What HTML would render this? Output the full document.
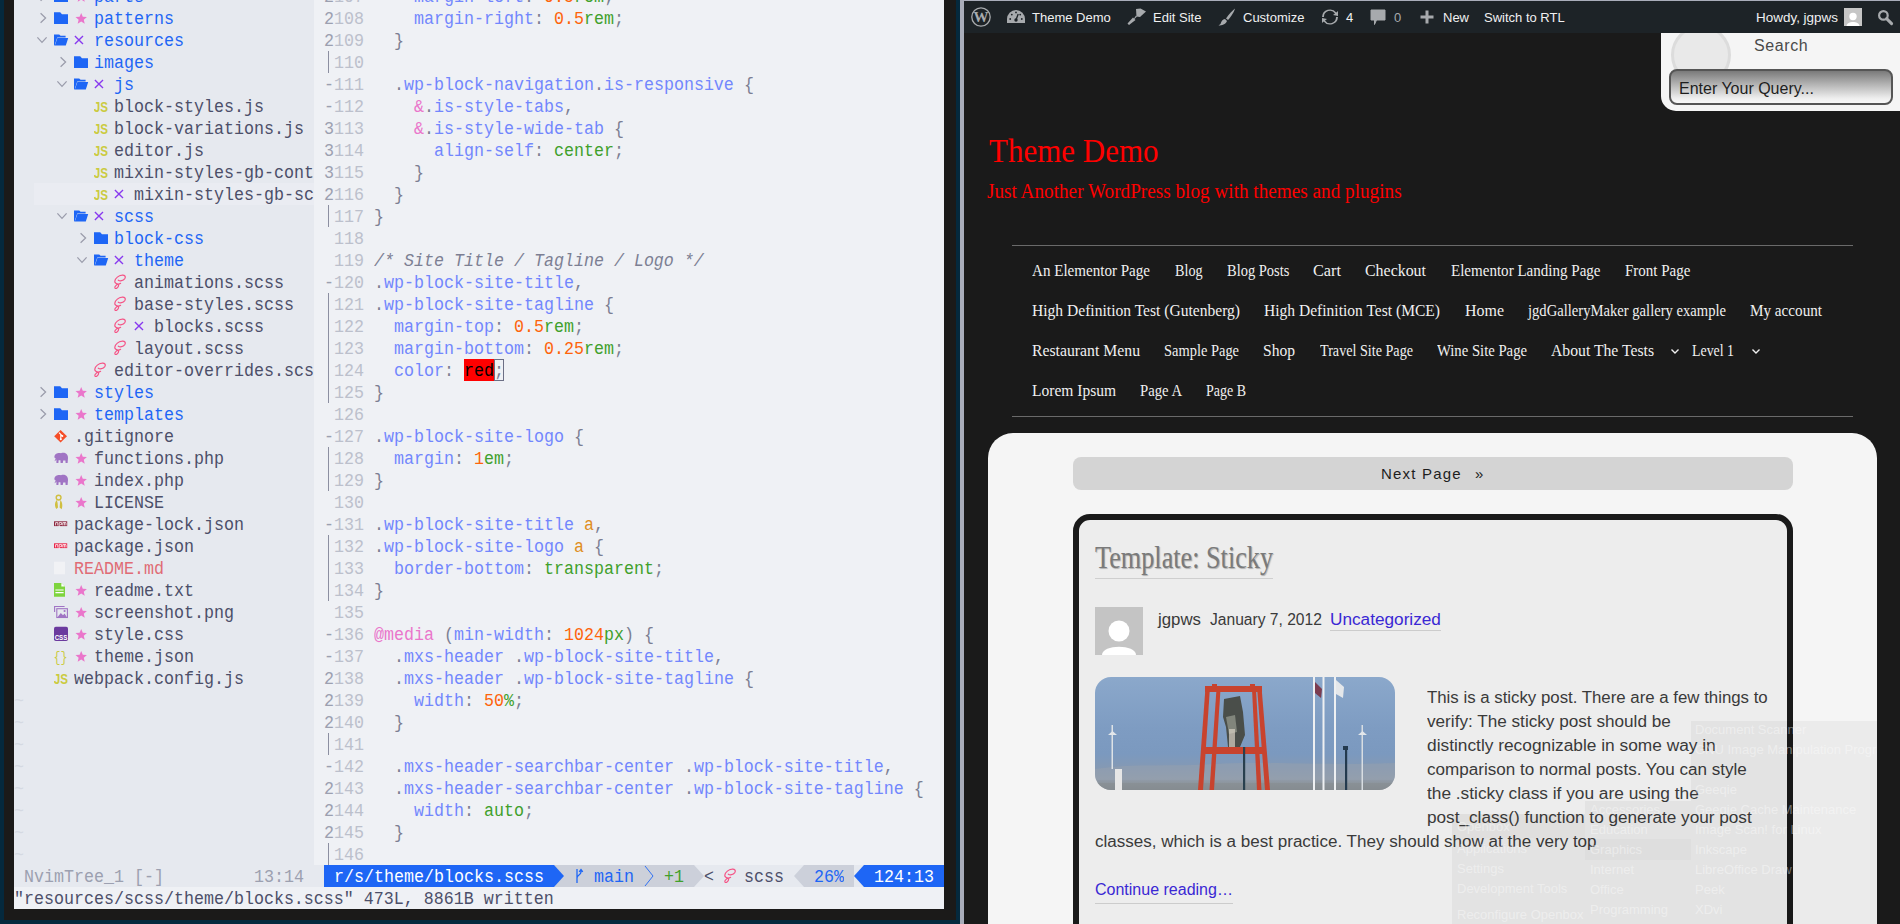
<!DOCTYPE html>
<html><head><meta charset="utf-8"><style>
*{margin:0;padding:0;box-sizing:border-box}
html,body{width:1900px;height:924px;overflow:hidden;background:#1a1a1a}
#term{position:absolute;left:0;top:0;width:960px;height:924px;background:#1b1a19;overflow:hidden}
.t{position:absolute;margin-top:2px;height:22px;line-height:22px;transform-origin:0 15.4px;transform:scaleY(1.08);white-space:pre;font-family:"Liberation Mono",monospace;font-size:16.667px}
.ic{position:absolute}
#web{position:absolute;left:964px;top:0;width:936px;height:924px;background:#1a1a1a;overflow:hidden;font-family:"Liberation Sans",sans-serif}
.w{position:absolute;white-space:nowrap}
</style></head><body>
<div style="position:absolute;left:0;top:0;width:4px;height:924px;background:#05293d"></div>
<div id="term">
<div style="position:absolute;left:0;top:0;width:4px;height:924px;background:#05293d"></div>
<div style="position:absolute;left:0;top:920px;width:960px;height:4px;background:#05293d"></div>
<div style="position:absolute;left:956px;top:0;width:4px;height:924px;background:#05293d"></div>
<div style="position:absolute;left:14px;top:0;width:300px;height:865px;background:#e6e9ef"></div>
<div style="position:absolute;left:314px;top:0;width:630px;height:865px;background:#eff1f5"></div>
<div style="position:absolute;left:34px;top:183px;width:280px;height:22px;background:#eaecf2"></div>
<svg class="ic" style="top:-15px;left:34px" width="20" height="22" viewBox="0 0 20 22"><path d="M6.6 6.2 L11.6 11 L6.6 15.8" fill="none" stroke="#9a9cab" stroke-width="1.25"/></svg>
<svg class="ic" style="top:-15px;left:54px" width="20" height="22" viewBox="0 0 20 22"><path d="M0 5.3 H6.2 L8 7.3 H14 V17 H0 Z" fill="#1e66f5"/></svg>
<svg class="ic" style="top:-15px;left:74px" width="20" height="22" viewBox="0 0 20 22"><path d="M7.20 5.90 L8.79 9.72 L12.91 10.05 L9.77 12.73 L10.73 16.75 L7.20 14.60 L3.67 16.75 L4.63 12.73 L1.49 10.05 L5.61 9.72 Z" fill="#ea76cb"/></svg>
<span class="t" style="top:-15px;left:94px;color:#1e66f5;">parts</span>
<svg class="ic" style="top:7px;left:34px" width="20" height="22" viewBox="0 0 20 22"><path d="M6.6 6.2 L11.6 11 L6.6 15.8" fill="none" stroke="#9a9cab" stroke-width="1.25"/></svg>
<svg class="ic" style="top:7px;left:54px" width="20" height="22" viewBox="0 0 20 22"><path d="M0 5.3 H6.2 L8 7.3 H14 V17 H0 Z" fill="#1e66f5"/></svg>
<svg class="ic" style="top:7px;left:74px" width="20" height="22" viewBox="0 0 20 22"><path d="M7.20 5.90 L8.79 9.72 L12.91 10.05 L9.77 12.73 L10.73 16.75 L7.20 14.60 L3.67 16.75 L4.63 12.73 L1.49 10.05 L5.61 9.72 Z" fill="#ea76cb"/></svg>
<span class="t" style="top:7px;left:94px;color:#1e66f5;">patterns</span>
<svg class="ic" style="top:29px;left:34px" width="20" height="22" viewBox="0 0 20 22"><path d="M3.4 8.4 L8 13.4 L12.6 8.4" fill="none" stroke="#9a9cab" stroke-width="1.25"/></svg>
<svg class="ic" style="top:29px;left:54px" width="20" height="22" viewBox="0 0 20 22"><path d="M0 5.4 H5.2 L6.6 6.8 H11.6 V8.6 H3.2 L0.6 16.6 H0 Z" fill="#1e66f5"/><path d="M3.4 8.9 H14.2 L11.8 16.6 H0.8 Z" fill="#1e66f5"/></svg>
<svg class="ic" style="top:29px;left:74px" width="20" height="22" viewBox="0 0 20 22"><path d="M0.9 6.9 L9 15 M9 6.9 L0.9 15" stroke="#8839ef" stroke-width="1.35"/></svg>
<span class="t" style="top:29px;left:94px;color:#1e66f5;">resources</span>
<svg class="ic" style="top:51px;left:54px" width="20" height="22" viewBox="0 0 20 22"><path d="M6.6 6.2 L11.6 11 L6.6 15.8" fill="none" stroke="#9a9cab" stroke-width="1.25"/></svg>
<svg class="ic" style="top:51px;left:74px" width="20" height="22" viewBox="0 0 20 22"><path d="M0 5.3 H6.2 L8 7.3 H14 V17 H0 Z" fill="#1e66f5"/></svg>
<span class="t" style="top:51px;left:94px;color:#1e66f5;">images</span>
<svg class="ic" style="top:73px;left:54px" width="20" height="22" viewBox="0 0 20 22"><path d="M3.4 8.4 L8 13.4 L12.6 8.4" fill="none" stroke="#9a9cab" stroke-width="1.25"/></svg>
<svg class="ic" style="top:73px;left:74px" width="20" height="22" viewBox="0 0 20 22"><path d="M0 5.4 H5.2 L6.6 6.8 H11.6 V8.6 H3.2 L0.6 16.6 H0 Z" fill="#1e66f5"/><path d="M3.4 8.9 H14.2 L11.8 16.6 H0.8 Z" fill="#1e66f5"/></svg>
<svg class="ic" style="top:73px;left:94px" width="20" height="22" viewBox="0 0 20 22"><path d="M0.9 6.9 L9 15 M9 6.9 L0.9 15" stroke="#8839ef" stroke-width="1.35"/></svg>
<span class="t" style="top:73px;left:114px;color:#1e66f5;">js</span>
<svg class="ic" style="top:95px;left:94px" width="20" height="22" viewBox="0 0 20 22"><text x="-0.2" y="16.8" font-family="Liberation Sans" font-weight="bold" font-size="14.6" fill="#cbcb41" textLength="14.2" lengthAdjust="spacingAndGlyphs">JS</text></svg>
<span class="t" style="top:95px;left:114px;color:#4c4f69;">block-styles.js</span>
<svg class="ic" style="top:117px;left:94px" width="20" height="22" viewBox="0 0 20 22"><text x="-0.2" y="16.8" font-family="Liberation Sans" font-weight="bold" font-size="14.6" fill="#cbcb41" textLength="14.2" lengthAdjust="spacingAndGlyphs">JS</text></svg>
<span class="t" style="top:117px;left:114px;color:#4c4f69;">block-variations.js</span>
<svg class="ic" style="top:139px;left:94px" width="20" height="22" viewBox="0 0 20 22"><text x="-0.2" y="16.8" font-family="Liberation Sans" font-weight="bold" font-size="14.6" fill="#cbcb41" textLength="14.2" lengthAdjust="spacingAndGlyphs">JS</text></svg>
<span class="t" style="top:139px;left:114px;color:#4c4f69;">editor.js</span>
<svg class="ic" style="top:161px;left:94px" width="20" height="22" viewBox="0 0 20 22"><text x="-0.2" y="16.8" font-family="Liberation Sans" font-weight="bold" font-size="14.6" fill="#cbcb41" textLength="14.2" lengthAdjust="spacingAndGlyphs">JS</text></svg>
<span class="t" style="top:161px;left:114px;color:#4c4f69;">mixin-styles-gb-cont</span>
<svg class="ic" style="top:183px;left:94px" width="20" height="22" viewBox="0 0 20 22"><text x="-0.2" y="16.8" font-family="Liberation Sans" font-weight="bold" font-size="14.6" fill="#cbcb41" textLength="14.2" lengthAdjust="spacingAndGlyphs">JS</text></svg>
<svg class="ic" style="top:183px;left:114px" width="20" height="22" viewBox="0 0 20 22"><path d="M0.9 6.9 L9 15 M9 6.9 L0.9 15" stroke="#8839ef" stroke-width="1.35"/></svg>
<span class="t" style="top:183px;left:134px;color:#4c4f69;">mixin-styles-gb-sc</span>
<svg class="ic" style="top:205px;left:54px" width="20" height="22" viewBox="0 0 20 22"><path d="M3.4 8.4 L8 13.4 L12.6 8.4" fill="none" stroke="#9a9cab" stroke-width="1.25"/></svg>
<svg class="ic" style="top:205px;left:74px" width="20" height="22" viewBox="0 0 20 22"><path d="M0 5.4 H5.2 L6.6 6.8 H11.6 V8.6 H3.2 L0.6 16.6 H0 Z" fill="#1e66f5"/><path d="M3.4 8.9 H14.2 L11.8 16.6 H0.8 Z" fill="#1e66f5"/></svg>
<svg class="ic" style="top:205px;left:94px" width="20" height="22" viewBox="0 0 20 22"><path d="M0.9 6.9 L9 15 M9 6.9 L0.9 15" stroke="#8839ef" stroke-width="1.35"/></svg>
<span class="t" style="top:205px;left:114px;color:#1e66f5;">scss</span>
<svg class="ic" style="top:227px;left:74px" width="20" height="22" viewBox="0 0 20 22"><path d="M6.6 6.2 L11.6 11 L6.6 15.8" fill="none" stroke="#9a9cab" stroke-width="1.25"/></svg>
<svg class="ic" style="top:227px;left:94px" width="20" height="22" viewBox="0 0 20 22"><path d="M0 5.3 H6.2 L8 7.3 H14 V17 H0 Z" fill="#1e66f5"/></svg>
<span class="t" style="top:227px;left:114px;color:#1e66f5;">block-css</span>
<svg class="ic" style="top:249px;left:74px" width="20" height="22" viewBox="0 0 20 22"><path d="M3.4 8.4 L8 13.4 L12.6 8.4" fill="none" stroke="#9a9cab" stroke-width="1.25"/></svg>
<svg class="ic" style="top:249px;left:94px" width="20" height="22" viewBox="0 0 20 22"><path d="M0 5.4 H5.2 L6.6 6.8 H11.6 V8.6 H3.2 L0.6 16.6 H0 Z" fill="#1e66f5"/><path d="M3.4 8.9 H14.2 L11.8 16.6 H0.8 Z" fill="#1e66f5"/></svg>
<svg class="ic" style="top:249px;left:114px" width="20" height="22" viewBox="0 0 20 22"><path d="M0.9 6.9 L9 15 M9 6.9 L0.9 15" stroke="#8839ef" stroke-width="1.35"/></svg>
<span class="t" style="top:249px;left:134px;color:#1e66f5;">theme</span>
<svg class="ic" style="top:271px;left:114px" width="20" height="22" viewBox="0 0 20 22"><path d="M4.3 9.2 C6 10.3 9 10 10.8 7.6 C12.2 5.6 10.6 3.8 8 4.2 C4.8 4.6 1.2 7 0.8 10.2 C0.6 12 2.6 13 4.4 13.2 C5.4 13.2 6.2 12.6 6.6 12.3 M4.4 13.2 C5 14.4 4.2 16.6 2.4 17.4 C0.6 18 0.4 16.2 1.6 14.8 C2.4 13.8 3.6 13.4 4.4 13.2" fill="none" stroke="#f55385" stroke-width="1.2" stroke-linecap="round"/></svg>
<span class="t" style="top:271px;left:134px;color:#4c4f69;">animations.scss</span>
<svg class="ic" style="top:293px;left:114px" width="20" height="22" viewBox="0 0 20 22"><path d="M4.3 9.2 C6 10.3 9 10 10.8 7.6 C12.2 5.6 10.6 3.8 8 4.2 C4.8 4.6 1.2 7 0.8 10.2 C0.6 12 2.6 13 4.4 13.2 C5.4 13.2 6.2 12.6 6.6 12.3 M4.4 13.2 C5 14.4 4.2 16.6 2.4 17.4 C0.6 18 0.4 16.2 1.6 14.8 C2.4 13.8 3.6 13.4 4.4 13.2" fill="none" stroke="#f55385" stroke-width="1.2" stroke-linecap="round"/></svg>
<span class="t" style="top:293px;left:134px;color:#4c4f69;">base-styles.scss</span>
<svg class="ic" style="top:315px;left:114px" width="20" height="22" viewBox="0 0 20 22"><path d="M4.3 9.2 C6 10.3 9 10 10.8 7.6 C12.2 5.6 10.6 3.8 8 4.2 C4.8 4.6 1.2 7 0.8 10.2 C0.6 12 2.6 13 4.4 13.2 C5.4 13.2 6.2 12.6 6.6 12.3 M4.4 13.2 C5 14.4 4.2 16.6 2.4 17.4 C0.6 18 0.4 16.2 1.6 14.8 C2.4 13.8 3.6 13.4 4.4 13.2" fill="none" stroke="#f55385" stroke-width="1.2" stroke-linecap="round"/></svg>
<svg class="ic" style="top:315px;left:134px" width="20" height="22" viewBox="0 0 20 22"><path d="M0.9 6.9 L9 15 M9 6.9 L0.9 15" stroke="#8839ef" stroke-width="1.35"/></svg>
<span class="t" style="top:315px;left:154px;color:#4c4f69;">blocks.scss</span>
<svg class="ic" style="top:337px;left:114px" width="20" height="22" viewBox="0 0 20 22"><path d="M4.3 9.2 C6 10.3 9 10 10.8 7.6 C12.2 5.6 10.6 3.8 8 4.2 C4.8 4.6 1.2 7 0.8 10.2 C0.6 12 2.6 13 4.4 13.2 C5.4 13.2 6.2 12.6 6.6 12.3 M4.4 13.2 C5 14.4 4.2 16.6 2.4 17.4 C0.6 18 0.4 16.2 1.6 14.8 C2.4 13.8 3.6 13.4 4.4 13.2" fill="none" stroke="#f55385" stroke-width="1.2" stroke-linecap="round"/></svg>
<span class="t" style="top:337px;left:134px;color:#4c4f69;">layout.scss</span>
<svg class="ic" style="top:359px;left:94px" width="20" height="22" viewBox="0 0 20 22"><path d="M4.3 9.2 C6 10.3 9 10 10.8 7.6 C12.2 5.6 10.6 3.8 8 4.2 C4.8 4.6 1.2 7 0.8 10.2 C0.6 12 2.6 13 4.4 13.2 C5.4 13.2 6.2 12.6 6.6 12.3 M4.4 13.2 C5 14.4 4.2 16.6 2.4 17.4 C0.6 18 0.4 16.2 1.6 14.8 C2.4 13.8 3.6 13.4 4.4 13.2" fill="none" stroke="#f55385" stroke-width="1.2" stroke-linecap="round"/></svg>
<span class="t" style="top:359px;left:114px;color:#4c4f69;">editor-overrides.scs</span>
<svg class="ic" style="top:381px;left:34px" width="20" height="22" viewBox="0 0 20 22"><path d="M6.6 6.2 L11.6 11 L6.6 15.8" fill="none" stroke="#9a9cab" stroke-width="1.25"/></svg>
<svg class="ic" style="top:381px;left:54px" width="20" height="22" viewBox="0 0 20 22"><path d="M0 5.3 H6.2 L8 7.3 H14 V17 H0 Z" fill="#1e66f5"/></svg>
<svg class="ic" style="top:381px;left:74px" width="20" height="22" viewBox="0 0 20 22"><path d="M7.20 5.90 L8.79 9.72 L12.91 10.05 L9.77 12.73 L10.73 16.75 L7.20 14.60 L3.67 16.75 L4.63 12.73 L1.49 10.05 L5.61 9.72 Z" fill="#ea76cb"/></svg>
<span class="t" style="top:381px;left:94px;color:#1e66f5;">styles</span>
<svg class="ic" style="top:403px;left:34px" width="20" height="22" viewBox="0 0 20 22"><path d="M6.6 6.2 L11.6 11 L6.6 15.8" fill="none" stroke="#9a9cab" stroke-width="1.25"/></svg>
<svg class="ic" style="top:403px;left:54px" width="20" height="22" viewBox="0 0 20 22"><path d="M0 5.3 H6.2 L8 7.3 H14 V17 H0 Z" fill="#1e66f5"/></svg>
<svg class="ic" style="top:403px;left:74px" width="20" height="22" viewBox="0 0 20 22"><path d="M7.20 5.90 L8.79 9.72 L12.91 10.05 L9.77 12.73 L10.73 16.75 L7.20 14.60 L3.67 16.75 L4.63 12.73 L1.49 10.05 L5.61 9.72 Z" fill="#ea76cb"/></svg>
<span class="t" style="top:403px;left:94px;color:#1e66f5;">templates</span>
<svg class="ic" style="top:425px;left:54px" width="20" height="22" viewBox="0 0 20 22"><path d="M6.6 4.9 L13 11.2 L6.6 17.5 L0.2 11.2 Z" fill="#f54d27"/><path d="M5 7.6 L8.2 10.8 M6.8 9.4 V14.2" stroke="#fff" stroke-width="1.1"/><circle cx="6.8" cy="14.2" r="1" fill="#fff"/><circle cx="8.3" cy="10.9" r="1" fill="#fff"/></svg>
<span class="t" style="top:425px;left:74px;color:#4c4f69;">.gitignore</span>
<svg class="ic" style="top:447px;left:54px" width="20" height="22" viewBox="0 0 20 22"><path d="M0.4 10 C0.4 6.6 4 5.6 7 6.2 C8.6 5.4 11.2 5.6 12.6 7 C13.8 8.2 14 9.6 14 11 L13.6 16 H11.6 L11.4 13.4 H9.2 L8.8 16 H6.6 L6.4 13.2 H4.6 L4.4 16 H2.4 L2.4 12.6 C1.6 13.6 1 14 0.6 14.4 C0.8 13 1.6 12.2 2 11.6 C1 11.4 0.4 10.8 0.4 10 Z" fill="#a074c4"/></svg>
<svg class="ic" style="top:447px;left:74px" width="20" height="22" viewBox="0 0 20 22"><path d="M7.20 5.90 L8.79 9.72 L12.91 10.05 L9.77 12.73 L10.73 16.75 L7.20 14.60 L3.67 16.75 L4.63 12.73 L1.49 10.05 L5.61 9.72 Z" fill="#ea76cb"/></svg>
<span class="t" style="top:447px;left:94px;color:#4c4f69;">functions.php</span>
<svg class="ic" style="top:469px;left:54px" width="20" height="22" viewBox="0 0 20 22"><path d="M0.4 10 C0.4 6.6 4 5.6 7 6.2 C8.6 5.4 11.2 5.6 12.6 7 C13.8 8.2 14 9.6 14 11 L13.6 16 H11.6 L11.4 13.4 H9.2 L8.8 16 H6.6 L6.4 13.2 H4.6 L4.4 16 H2.4 L2.4 12.6 C1.6 13.6 1 14 0.6 14.4 C0.8 13 1.6 12.2 2 11.6 C1 11.4 0.4 10.8 0.4 10 Z" fill="#a074c4"/></svg>
<svg class="ic" style="top:469px;left:74px" width="20" height="22" viewBox="0 0 20 22"><path d="M7.20 5.90 L8.79 9.72 L12.91 10.05 L9.77 12.73 L10.73 16.75 L7.20 14.60 L3.67 16.75 L4.63 12.73 L1.49 10.05 L5.61 9.72 Z" fill="#ea76cb"/></svg>
<span class="t" style="top:469px;left:94px;color:#4c4f69;">index.php</span>
<svg class="ic" style="top:491px;left:54px" width="20" height="22" viewBox="0 0 20 22"><circle cx="4.6" cy="6.6" r="2.4" fill="none" stroke="#d0bf41" stroke-width="1.4"/><path d="M2.8 9 C0.4 11 0.6 16 2.4 18 L4 16.4 L3.6 12 Z M6.4 9 C8.6 11 8.8 16 7.6 18.2 L5.6 16.6 L6 12 Z" fill="#d0bf41"/></svg>
<svg class="ic" style="top:491px;left:74px" width="20" height="22" viewBox="0 0 20 22"><path d="M7.20 5.90 L8.79 9.72 L12.91 10.05 L9.77 12.73 L10.73 16.75 L7.20 14.60 L3.67 16.75 L4.63 12.73 L1.49 10.05 L5.61 9.72 Z" fill="#ea76cb"/></svg>
<span class="t" style="top:491px;left:94px;color:#4c4f69;">LICENSE</span>
<svg class="ic" style="top:513px;left:54px" width="20" height="22" viewBox="0 0 20 22"><rect x="0" y="8.3" width="13.2" height="4.8" fill="#8e2840"/><path d="M1.6 12.4 V9.6 H3.8 V12.4 M5.2 13.8 V9.6 H7.6 V11.6 H6.2 M8.8 12.4 V9.6 H12 V12.4 M10.4 9.6 V12.4" stroke="#fff" stroke-width="0.8" fill="none"/></svg>
<span class="t" style="top:513px;left:74px;color:#4c4f69;">package-lock.json</span>
<svg class="ic" style="top:535px;left:54px" width="20" height="22" viewBox="0 0 20 22"><rect x="0" y="8.3" width="13.2" height="4.8" fill="#e8274b"/><path d="M1.6 12.4 V9.6 H3.8 V12.4 M5.2 13.8 V9.6 H7.6 V11.6 H6.2 M8.8 12.4 V9.6 H12 V12.4 M10.4 9.6 V12.4" stroke="#fff" stroke-width="0.8" fill="none"/></svg>
<span class="t" style="top:535px;left:74px;color:#4c4f69;">package.json</span>
<svg class="ic" style="top:557px;left:54px" width="20" height="22" viewBox="0 0 20 22"><path d="M0 4.7 H11 V17.3 H0 Z" fill="#f1f2f5"/></svg>
<span class="t" style="top:557px;left:74px;color:#e06c75;">README.md</span>
<svg class="ic" style="top:579px;left:54px" width="20" height="22" viewBox="0 0 20 22"><path d="M0 4 H7.4 L11 7.6 V17.7 H0 Z" fill="#7ed43e"/><path d="M7.4 4 V7.6 H11 Z" fill="#fff"/><path d="M1.4 11 H9.6 M1.4 13.6 H9.6" stroke="#fff" stroke-width="1.2"/></svg>
<svg class="ic" style="top:579px;left:74px" width="20" height="22" viewBox="0 0 20 22"><path d="M7.20 5.90 L8.79 9.72 L12.91 10.05 L9.77 12.73 L10.73 16.75 L7.20 14.60 L3.67 16.75 L4.63 12.73 L1.49 10.05 L5.61 9.72 Z" fill="#ea76cb"/></svg>
<span class="t" style="top:579px;left:94px;color:#4c4f69;">readme.txt</span>
<svg class="ic" style="top:601px;left:54px" width="20" height="22" viewBox="0 0 20 22"><path d="M0.6 11 V5.5 H10.6" fill="none" stroke="#a074c4" stroke-width="1.1"/><rect x="2.8" y="7.7" width="10.6" height="8.8" fill="none" stroke="#a074c4" stroke-width="1.1"/><path d="M3.3 16.4 L6.8 12 L9 14.2 L10.6 12.6 L13 16.4 Z" fill="#a074c4"/><circle cx="10.6" cy="10" r="1.1" fill="#a074c4"/></svg>
<svg class="ic" style="top:601px;left:74px" width="20" height="22" viewBox="0 0 20 22"><path d="M7.20 5.90 L8.79 9.72 L12.91 10.05 L9.77 12.73 L10.73 16.75 L7.20 14.60 L3.67 16.75 L4.63 12.73 L1.49 10.05 L5.61 9.72 Z" fill="#ea76cb"/></svg>
<span class="t" style="top:601px;left:94px;color:#4c4f69;">screenshot.png</span>
<svg class="ic" style="top:623px;left:54px" width="20" height="22" viewBox="0 0 20 22"><rect x="0" y="3.8" width="14" height="14.2" rx="1.8" fill="#6b3a9e"/><text x="7" y="16.6" text-anchor="middle" font-family="Liberation Sans" font-weight="bold" font-size="8" fill="#fff" textLength="12.6" lengthAdjust="spacingAndGlyphs">CSS</text></svg>
<svg class="ic" style="top:623px;left:74px" width="20" height="22" viewBox="0 0 20 22"><path d="M7.20 5.90 L8.79 9.72 L12.91 10.05 L9.77 12.73 L10.73 16.75 L7.20 14.60 L3.67 16.75 L4.63 12.73 L1.49 10.05 L5.61 9.72 Z" fill="#ea76cb"/></svg>
<span class="t" style="top:623px;left:94px;color:#4c4f69;">style.css</span>
<svg class="ic" style="top:645px;left:54px" width="20" height="22" viewBox="0 0 20 22"><text x="-0.5" y="16.6" font-family="Liberation Mono" font-size="15" fill="#cbcb41" textLength="14" lengthAdjust="spacingAndGlyphs">{}</text></svg>
<svg class="ic" style="top:645px;left:74px" width="20" height="22" viewBox="0 0 20 22"><path d="M7.20 5.90 L8.79 9.72 L12.91 10.05 L9.77 12.73 L10.73 16.75 L7.20 14.60 L3.67 16.75 L4.63 12.73 L1.49 10.05 L5.61 9.72 Z" fill="#ea76cb"/></svg>
<span class="t" style="top:645px;left:94px;color:#4c4f69;">theme.json</span>
<svg class="ic" style="top:667px;left:54px" width="20" height="22" viewBox="0 0 20 22"><text x="-0.2" y="16.8" font-family="Liberation Sans" font-weight="bold" font-size="14.6" fill="#cbcb41" textLength="14.2" lengthAdjust="spacingAndGlyphs">JS</text></svg>
<span class="t" style="top:667px;left:74px;color:#4c4f69;">webpack.config.js</span>
<span class="t" style="top:689px;left:14px;color:#d5d9e2;">~</span>
<span class="t" style="top:711px;left:14px;color:#d5d9e2;">~</span>
<span class="t" style="top:733px;left:14px;color:#d5d9e2;">~</span>
<span class="t" style="top:755px;left:14px;color:#d5d9e2;">~</span>
<span class="t" style="top:777px;left:14px;color:#d5d9e2;">~</span>
<span class="t" style="top:799px;left:14px;color:#d5d9e2;">~</span>
<span class="t" style="top:821px;left:14px;color:#d5d9e2;">~</span>
<span class="t" style="top:843px;left:14px;color:#d5d9e2;">~</span>
<div style="position:absolute;left:464px;top:359px;width:30px;height:22px;background:#ff0000"></div>
<span class="t" style="top:-15px;left:324px;color:#9ca0b0;">2</span>
<span class="t" style="top:-15px;left:334px;color:#bcc0cc;">107</span>
<span class="t" style="top:-15px;left:374px"><span style="color:#7c7f93">    </span><span style="color:#7287fd">margin-left</span><span style="color:#7c7f93">: </span><span style="color:#fe640b">0.5</span><span style="color:#40a02b">rem</span><span style="color:#7c7f93">;</span></span>
<span class="t" style="top:7px;left:324px;color:#9ca0b0;">2</span>
<span class="t" style="top:7px;left:334px;color:#bcc0cc;">108</span>
<span class="t" style="top:7px;left:374px"><span style="color:#7c7f93">    </span><span style="color:#7287fd">margin-right</span><span style="color:#7c7f93">: </span><span style="color:#fe640b">0.5</span><span style="color:#40a02b">rem</span><span style="color:#7c7f93">;</span></span>
<span class="t" style="top:29px;left:324px;color:#9ca0b0;">2</span>
<span class="t" style="top:29px;left:334px;color:#bcc0cc;">109</span>
<span class="t" style="top:29px;left:374px"><span style="color:#7c7f93">  }</span></span>
<span class="t" style="top:51px;left:334px;color:#bcc0cc;">110</span>
<span class="t" style="top:73px;left:324px;color:#9ca0b0;">-</span>
<span class="t" style="top:73px;left:334px;color:#bcc0cc;">111</span>
<span class="t" style="top:73px;left:374px"><span style="color:#7c7f93">  </span><span style="color:#7c7f93">.</span><span style="color:#7287fd">wp-block-navigation</span><span style="color:#7c7f93">.</span><span style="color:#7287fd">is-responsive</span><span style="color:#7c7f93"> </span><span style="color:#7c7f93">{</span></span>
<span class="t" style="top:95px;left:324px;color:#9ca0b0;">-</span>
<span class="t" style="top:95px;left:334px;color:#bcc0cc;">112</span>
<span class="t" style="top:95px;left:374px"><span style="color:#7c7f93">    </span><span style="color:#ea76cb">&amp;</span><span style="color:#7c7f93">.</span><span style="color:#7287fd">is-style-tabs</span><span style="color:#7c7f93">,</span></span>
<span class="t" style="top:117px;left:324px;color:#9ca0b0;">3</span>
<span class="t" style="top:117px;left:334px;color:#bcc0cc;">113</span>
<span class="t" style="top:117px;left:374px"><span style="color:#7c7f93">    </span><span style="color:#ea76cb">&amp;</span><span style="color:#7c7f93">.</span><span style="color:#7287fd">is-style-wide-tab</span><span style="color:#7c7f93"> </span><span style="color:#7c7f93">{</span></span>
<span class="t" style="top:139px;left:324px;color:#9ca0b0;">3</span>
<span class="t" style="top:139px;left:334px;color:#bcc0cc;">114</span>
<span class="t" style="top:139px;left:374px"><span style="color:#7c7f93">      </span><span style="color:#7287fd">align-self</span><span style="color:#7c7f93">: </span><span style="color:#40a02b">center</span><span style="color:#7c7f93">;</span></span>
<span class="t" style="top:161px;left:324px;color:#9ca0b0;">3</span>
<span class="t" style="top:161px;left:334px;color:#bcc0cc;">115</span>
<span class="t" style="top:161px;left:374px"><span style="color:#7c7f93">    }</span></span>
<span class="t" style="top:183px;left:324px;color:#9ca0b0;">2</span>
<span class="t" style="top:183px;left:334px;color:#bcc0cc;">116</span>
<span class="t" style="top:183px;left:374px"><span style="color:#7c7f93">  }</span></span>
<span class="t" style="top:205px;left:334px;color:#bcc0cc;">117</span>
<span class="t" style="top:205px;left:374px"><span style="color:#7c7f93">}</span></span>
<span class="t" style="top:227px;left:334px;color:#bcc0cc;">118</span>
<span class="t" style="top:249px;left:334px;color:#bcc0cc;">119</span>
<span class="t" style="top:249px;left:374px"><span style="color:#7c7f93;font-style:italic">/* Site Title / Tagline / Logo */</span></span>
<span class="t" style="top:271px;left:324px;color:#9ca0b0;">-</span>
<span class="t" style="top:271px;left:334px;color:#bcc0cc;">120</span>
<span class="t" style="top:271px;left:374px"><span style="color:#7c7f93">.</span><span style="color:#7287fd">wp-block-site-title</span><span style="color:#7c7f93">,</span></span>
<span class="t" style="top:293px;left:334px;color:#bcc0cc;">121</span>
<span class="t" style="top:293px;left:374px"><span style="color:#7c7f93">.</span><span style="color:#7287fd">wp-block-site-tagline</span><span style="color:#7c7f93"> </span><span style="color:#7c7f93">{</span></span>
<span class="t" style="top:315px;left:334px;color:#bcc0cc;">122</span>
<span class="t" style="top:315px;left:374px"><span style="color:#7c7f93">  </span><span style="color:#7287fd">margin-top</span><span style="color:#7c7f93">: </span><span style="color:#fe640b">0.5</span><span style="color:#40a02b">rem</span><span style="color:#7c7f93">;</span></span>
<span class="t" style="top:337px;left:334px;color:#bcc0cc;">123</span>
<span class="t" style="top:337px;left:374px"><span style="color:#7c7f93">  </span><span style="color:#7287fd">margin-bottom</span><span style="color:#7c7f93">: </span><span style="color:#fe640b">0.25</span><span style="color:#40a02b">rem</span><span style="color:#7c7f93">;</span></span>
<span class="t" style="top:359px;left:334px;color:#bcc0cc;">124</span>
<span class="t" style="top:359px;left:374px"><span style="color:#7c7f93">  </span><span style="color:#7287fd">color</span><span style="color:#7c7f93">: </span><span style="color:#000000">red</span><span style="color:#7c7f93">;</span></span>
<span class="t" style="top:381px;left:334px;color:#bcc0cc;">125</span>
<span class="t" style="top:381px;left:374px"><span style="color:#7c7f93">}</span></span>
<span class="t" style="top:403px;left:334px;color:#bcc0cc;">126</span>
<span class="t" style="top:425px;left:324px;color:#9ca0b0;">-</span>
<span class="t" style="top:425px;left:334px;color:#bcc0cc;">127</span>
<span class="t" style="top:425px;left:374px"><span style="color:#7c7f93">.</span><span style="color:#7287fd">wp-block-site-logo</span><span style="color:#7c7f93"> </span><span style="color:#7c7f93">{</span></span>
<span class="t" style="top:447px;left:334px;color:#bcc0cc;">128</span>
<span class="t" style="top:447px;left:374px"><span style="color:#7c7f93">  </span><span style="color:#7287fd">margin</span><span style="color:#7c7f93">: </span><span style="color:#fe640b">1</span><span style="color:#40a02b">em</span><span style="color:#7c7f93">;</span></span>
<span class="t" style="top:469px;left:334px;color:#bcc0cc;">129</span>
<span class="t" style="top:469px;left:374px"><span style="color:#7c7f93">}</span></span>
<span class="t" style="top:491px;left:334px;color:#bcc0cc;">130</span>
<span class="t" style="top:513px;left:324px;color:#9ca0b0;">-</span>
<span class="t" style="top:513px;left:334px;color:#bcc0cc;">131</span>
<span class="t" style="top:513px;left:374px"><span style="color:#7c7f93">.</span><span style="color:#7287fd">wp-block-site-title</span><span style="color:#7c7f93"> </span><span style="color:#df8e1d">a</span><span style="color:#7c7f93">,</span></span>
<span class="t" style="top:535px;left:334px;color:#bcc0cc;">132</span>
<span class="t" style="top:535px;left:374px"><span style="color:#7c7f93">.</span><span style="color:#7287fd">wp-block-site-logo</span><span style="color:#7c7f93"> </span><span style="color:#df8e1d">a</span><span style="color:#7c7f93"> </span><span style="color:#7c7f93">{</span></span>
<span class="t" style="top:557px;left:334px;color:#bcc0cc;">133</span>
<span class="t" style="top:557px;left:374px"><span style="color:#7c7f93">  </span><span style="color:#7287fd">border-bottom</span><span style="color:#7c7f93">: </span><span style="color:#40a02b">transparent</span><span style="color:#7c7f93">;</span></span>
<span class="t" style="top:579px;left:334px;color:#bcc0cc;">134</span>
<span class="t" style="top:579px;left:374px"><span style="color:#7c7f93">}</span></span>
<span class="t" style="top:601px;left:334px;color:#bcc0cc;">135</span>
<span class="t" style="top:623px;left:324px;color:#9ca0b0;">-</span>
<span class="t" style="top:623px;left:334px;color:#bcc0cc;">136</span>
<span class="t" style="top:623px;left:374px"><span style="color:#ea76cb">@media</span><span style="color:#7c7f93"> (</span><span style="color:#7287fd">min-width</span><span style="color:#7c7f93">: </span><span style="color:#fe640b">1024</span><span style="color:#40a02b">px</span><span style="color:#7c7f93">) {</span></span>
<span class="t" style="top:645px;left:324px;color:#9ca0b0;">-</span>
<span class="t" style="top:645px;left:334px;color:#bcc0cc;">137</span>
<span class="t" style="top:645px;left:374px"><span style="color:#7c7f93">  </span><span style="color:#7c7f93">.</span><span style="color:#7287fd">mxs-header</span><span style="color:#7c7f93"> </span><span style="color:#7c7f93">.</span><span style="color:#7287fd">wp-block-site-title</span><span style="color:#7c7f93">,</span></span>
<span class="t" style="top:667px;left:324px;color:#9ca0b0;">2</span>
<span class="t" style="top:667px;left:334px;color:#bcc0cc;">138</span>
<span class="t" style="top:667px;left:374px"><span style="color:#7c7f93">  </span><span style="color:#7c7f93">.</span><span style="color:#7287fd">mxs-header</span><span style="color:#7c7f93"> </span><span style="color:#7c7f93">.</span><span style="color:#7287fd">wp-block-site-tagline</span><span style="color:#7c7f93"> </span><span style="color:#7c7f93">{</span></span>
<span class="t" style="top:689px;left:324px;color:#9ca0b0;">2</span>
<span class="t" style="top:689px;left:334px;color:#bcc0cc;">139</span>
<span class="t" style="top:689px;left:374px"><span style="color:#7c7f93">    </span><span style="color:#7287fd">width</span><span style="color:#7c7f93">: </span><span style="color:#fe640b">50</span><span style="color:#40a02b">%</span><span style="color:#7c7f93">;</span></span>
<span class="t" style="top:711px;left:324px;color:#9ca0b0;">2</span>
<span class="t" style="top:711px;left:334px;color:#bcc0cc;">140</span>
<span class="t" style="top:711px;left:374px"><span style="color:#7c7f93">  }</span></span>
<span class="t" style="top:733px;left:334px;color:#bcc0cc;">141</span>
<span class="t" style="top:755px;left:324px;color:#9ca0b0;">-</span>
<span class="t" style="top:755px;left:334px;color:#bcc0cc;">142</span>
<span class="t" style="top:755px;left:374px"><span style="color:#7c7f93">  </span><span style="color:#7c7f93">.</span><span style="color:#7287fd">mxs-header-searchbar-center</span><span style="color:#7c7f93"> </span><span style="color:#7c7f93">.</span><span style="color:#7287fd">wp-block-site-title</span><span style="color:#7c7f93">,</span></span>
<span class="t" style="top:777px;left:324px;color:#9ca0b0;">2</span>
<span class="t" style="top:777px;left:334px;color:#bcc0cc;">143</span>
<span class="t" style="top:777px;left:374px"><span style="color:#7c7f93">  </span><span style="color:#7c7f93">.</span><span style="color:#7287fd">mxs-header-searchbar-center</span><span style="color:#7c7f93"> </span><span style="color:#7c7f93">.</span><span style="color:#7287fd">wp-block-site-tagline</span><span style="color:#7c7f93"> </span><span style="color:#7c7f93">{</span></span>
<span class="t" style="top:799px;left:324px;color:#9ca0b0;">2</span>
<span class="t" style="top:799px;left:334px;color:#bcc0cc;">144</span>
<span class="t" style="top:799px;left:374px"><span style="color:#7c7f93">    </span><span style="color:#7287fd">width</span><span style="color:#7c7f93">: </span><span style="color:#40a02b">auto</span><span style="color:#7c7f93">;</span></span>
<span class="t" style="top:821px;left:324px;color:#9ca0b0;">2</span>
<span class="t" style="top:821px;left:334px;color:#bcc0cc;">145</span>
<span class="t" style="top:821px;left:374px"><span style="color:#7c7f93">  }</span></span>
<span class="t" style="top:843px;left:334px;color:#bcc0cc;">146</span>
<div style="position:absolute;left:328px;top:51px;width:1px;height:22px;background:#8c8fa1"></div>
<div style="position:absolute;left:328px;top:205px;width:1px;height:22px;background:#8c8fa1"></div>
<div style="position:absolute;left:328px;top:293px;width:1px;height:22px;background:#8c8fa1"></div>
<div style="position:absolute;left:328px;top:315px;width:1px;height:22px;background:#8c8fa1"></div>
<div style="position:absolute;left:328px;top:337px;width:1px;height:22px;background:#8c8fa1"></div>
<div style="position:absolute;left:328px;top:359px;width:1px;height:22px;background:#8c8fa1"></div>
<div style="position:absolute;left:328px;top:381px;width:1px;height:22px;background:#8c8fa1"></div>
<div style="position:absolute;left:328px;top:447px;width:1px;height:22px;background:#8c8fa1"></div>
<div style="position:absolute;left:328px;top:469px;width:1px;height:22px;background:#8c8fa1"></div>
<div style="position:absolute;left:328px;top:535px;width:1px;height:22px;background:#8c8fa1"></div>
<div style="position:absolute;left:328px;top:557px;width:1px;height:22px;background:#8c8fa1"></div>
<div style="position:absolute;left:328px;top:579px;width:1px;height:22px;background:#8c8fa1"></div>
<div style="position:absolute;left:328px;top:733px;width:1px;height:22px;background:#8c8fa1"></div>
<div style="position:absolute;left:328px;top:843px;width:1px;height:22px;background:#8c8fa1"></div>
<div style="position:absolute;left:494px;top:359px;width:10px;height:22px;border:1.5px solid #6c6f85"></div>
<div style="position:absolute;left:14px;top:865px;width:310px;height:22px;background:#e6e9ef"></div>
<span class="t" style="top:865px;left:24px;color:#9ca0b0;">NvimTree_1 [-]</span>
<span class="t" style="top:865px;left:254px;color:#9ca0b0;">13:14</span>
<div style="position:absolute;left:324px;top:865px;width:620px;height:22px;background:#e6e9ef"></div>
<div style="position:absolute;left:324px;top:865px;width:230px;height:22px;background:#1e66f5"></div>
<div style="position:absolute;left:554px;top:865px;width:140px;height:22px;background:#ccd0da"></div>
<svg style="position:absolute;left:554px;top:865px" width="10" height="22"><path d="M0 0 L10 11 L0 22 Z" fill="#1e66f5"/></svg>
<svg style="position:absolute;left:694px;top:865px" width="10" height="22"><path d="M0 0 L10 11 L0 22 Z" fill="#ccd0da"/></svg>
<div style="position:absolute;left:804px;top:865px;width:50px;height:22px;background:#ccd0da"></div>
<svg style="position:absolute;left:794px;top:865px" width="10" height="22"><path d="M10 0 L0 11 L10 22 Z" fill="#ccd0da"/></svg>
<div style="position:absolute;left:864px;top:865px;width:80px;height:22px;background:#1e66f5"></div>
<svg style="position:absolute;left:854px;top:865px" width="10" height="22"><path d="M10 0 L0 11 L10 22 Z" fill="#1e66f5"/></svg>
<span class="t" style="top:865px;left:334px;color:#ffffff;">r/s/theme/blocks.scss</span>
<svg style="position:absolute;left:574px;top:865px" width="10" height="22"><path d="M3 4 V18 M3 13 C3 10 7 10 7 7 V5 M5.2 6.8 L7 4.5 L8.8 6.8" fill="none" stroke="#1e66f5" stroke-width="1.3"/></svg>
<span class="t" style="top:865px;left:594px;color:#1e66f5;">main</span>
<svg style="position:absolute;left:644px;top:865px" width="10" height="22"><path d="M1 1 L9 11 L1 21" fill="none" stroke="#1e66f5" stroke-width="0.9"/></svg>
<span class="t" style="top:865px;left:664px;color:#40a02b;">+1</span>
<span class="t" style="top:865px;left:704px;color:#4c4f69;">&lt;</span>
<svg style="position:absolute;left:724px;top:865px" width="14" height="22"><path d="M4.3 9.2 C6 10.3 9 10 10.8 7.6 C12.2 5.6 10.6 3.8 8 4.2 C4.8 4.6 1.2 7 0.8 10.2 C0.6 12 2.6 13 4.4 13.2 C5.4 13.2 6.2 12.6 6.6 12.3 M4.4 13.2 C5 14.4 4.2 16.6 2.4 17.4 C0.6 18 0.4 16.2 1.6 14.8 C2.4 13.8 3.6 13.4 4.4 13.2" fill="none" stroke="#f55385" stroke-width="1.2" stroke-linecap="round"/></svg>
<span class="t" style="top:865px;left:744px;color:#4c4f69;">scss</span>
<span class="t" style="top:865px;left:814px;color:#1e66f5;">26%</span>
<span class="t" style="top:865px;left:874px;color:#ffffff;">124:13</span>
<div style="position:absolute;left:14px;top:887px;width:930px;height:22px;background:#eff1f5"></div>
<span class="t" style="top:887px;left:14px;color:#4c4f69;">&quot;resources/scss/theme/blocks.scss&quot; 473L, 8861B written</span>
</div>
<div style="position:absolute;left:960px;top:0;width:4px;height:924px;background:#a9adba"></div>
<div id="web">
<div style="position:absolute;left:0px;top:1px;width:936px;height:32px;background:#1d2327"></div>
<svg style="position:absolute;left:7px;top:7px" width="20" height="20" viewBox="0 0 20 20"><circle cx="10" cy="10" r="9.2" fill="none" stroke="#a7aaad" stroke-width="1.3"/><text x="10" y="15.2" text-anchor="middle" font-family="Liberation Serif" font-weight="bold" font-size="15" fill="#a7aaad" textLength="15" lengthAdjust="spacingAndGlyphs">W</text></svg>
<svg style="position:absolute;left:43px;top:8px" width="18" height="16" viewBox="0 0 18 16"><path d="M0 15 V11 A9 9 0 0 1 18 11 V15 Z" fill="#a7aaad"/><circle cx="9" cy="12" r="1.7" fill="#1d2327"/><path d="M9 12 L11.2 6" stroke="#1d2327" stroke-width="1.3"/><circle cx="3.2" cy="11" r="0.9" fill="#1d2327"/><circle cx="4.8" cy="6.6" r="0.9" fill="#1d2327"/><circle cx="9" cy="4.4" r="0.9" fill="#1d2327"/><circle cx="14.8" cy="11" r="0.9" fill="#1d2327"/><circle cx="13.2" cy="6.6" r="0.9" fill="#1d2327"/></svg>
<div class="w" style="left:68px;top:2px;font-size:13px;color:#f0f0f1;line-height:32px;height:32px">Theme Demo</div>
<svg style="position:absolute;left:163px;top:8px" width="20" height="18" viewBox="0 0 20 18"><path d="M9 1 L13.5 0.5 L19 3.5 L13 9 L9.5 8.5 Z" fill="#a7aaad"/><path d="M10 8.5 L7.5 11 L8.5 12 L2 17 L0.5 15.5 L6 9.5 L7 10.5 L9 7.5 Z" fill="#a7aaad"/></svg>
<div class="w" style="left:189px;top:2px;font-size:13px;color:#f0f0f1;line-height:32px;height:32px">Edit Site</div>
<svg style="position:absolute;left:254px;top:8px" width="18" height="18" viewBox="0 0 18 18"><path d="M17 0.5 C15 2 10 7 8 10.5 L10 12 C13 9 16.5 3 17 0.5 Z" fill="#a7aaad"/><path d="M7 11 C4.5 11.5 3.5 13 2.5 16 L0.5 17.5 C4 17.5 7.5 16.5 9 13 Z" fill="#a7aaad"/></svg>
<div class="w" style="left:279px;top:2px;font-size:13px;color:#f0f0f1;line-height:32px;height:32px">Customize</div>
<svg style="position:absolute;left:357px;top:8px" width="18" height="18" viewBox="0 0 18 18"><path d="M3 9 A6 6 0 0 1 14 5.5 L12 7 L17 8 L17 3 L15.3 4.6 A8 8 0 0 0 1 9 Z" fill="#a7aaad"/><path d="M15 9 A6 6 0 0 1 4 12.5 L6 11 L1 10 L1 15 L2.7 13.4 A8 8 0 0 0 17 9 Z" fill="#a7aaad"/></svg>
<div class="w" style="left:382px;top:2px;font-size:13px;color:#f0f0f1;line-height:32px;height:32px">4</div>
<svg style="position:absolute;left:406px;top:9px" width="16" height="18" viewBox="0 0 16 18"><path d="M1 1 H15 V11 H6.5 L4.5 15.5 L4.5 11 H1 Z" fill="#a7aaad" stroke="#a7aaad" stroke-width="1" stroke-linejoin="round"/></svg>
<div class="w" style="left:430px;top:2px;font-size:13px;color:#a7aaad;line-height:32px;height:32px">0</div>
<svg style="position:absolute;left:456px;top:10px" width="14" height="14" viewBox="0 0 14 14"><path d="M7 0.5 V13.5 M0.5 7 H13.5" stroke="#a7aaad" stroke-width="3"/></svg>
<div class="w" style="left:479px;top:2px;font-size:13px;color:#f0f0f1;line-height:32px;height:32px">New</div>
<div class="w" style="left:520px;top:2px;font-size:13px;color:#f0f0f1;line-height:32px;height:32px">Switch to RTL</div>
<div class="w" style="left:792px;top:2px;font-size:13px;color:#f0f0f1;line-height:32px;height:32px;transform-origin:0 0;transform:scaleX(1.035)">Howdy, jgpws</div>
<div style="position:absolute;left:880px;top:8px;width:18px;height:18px;background:#c6c6c6"></div>
<svg style="position:absolute;left:880px;top:8px" width="18" height="18" viewBox="0 0 18 18"><circle cx="9" cy="8.5" r="3.7" fill="#fff"/><path d="M2.5 18 C3 12.8 15 12.8 15.5 18 Z" fill="#fff"/></svg>
<svg style="position:absolute;left:913px;top:9px" width="17" height="17" viewBox="0 0 17 17"><circle cx="6.4" cy="6.4" r="4.3" fill="none" stroke="#a7aaad" stroke-width="2.2"/><path d="M9.6 9.6 L14.6 14.6" stroke="#a7aaad" stroke-width="3" stroke-linecap="round"/></svg>
<div style="position:absolute;left:697px;top:33px;width:239px;height:78px;background:#f5f5f5;border-bottom-left-radius:15px"></div>
<div style="position:absolute;left:707px;top:25px;width:60px;height:60px;border-radius:50%;border:3px solid #dcdcdc;background:#e9e9e9;clip-path:inset(8px -5px -5px -5px)"></div>
<div class="w" style="left:790px;top:34px;font-size:16px;color:#4a4a4a;line-height:24px;letter-spacing:0.6px">Search</div>
<div style="position:absolute;left:705px;top:69px;width:224px;height:36px;border:2px solid #555555;border-radius:8px;background:linear-gradient(#7a7a7a,#b8b8b8 45%,#eeeeee 85%,#f8f8f8)"></div>
<div class="w" style="left:715px;top:78px;font-size:16px;color:#1e1e1e;line-height:22px">Enter Your Query...</div>
<div class="w" style="left:25px;top:131px;font-family:'Liberation Serif',serif;color:#ff0000;transform-origin:0 0;white-space:nowrap;font-size:33.5px;line-height:40px;transform:scaleX(0.925)">Theme Demo</div>
<div class="w" style="left:23px;top:178px;font-family:'Liberation Serif',serif;color:#ff0000;transform-origin:0 0;white-space:nowrap;font-size:20px;line-height:26px;transform:scaleX(0.96)">Just Another WordPress blog with themes and plugins</div>
<div style="position:absolute;left:48px;top:245px;width:841px;height:1px;background:#6a6a6a"></div>
<div style="position:absolute;left:48px;top:416px;width:841px;height:1px;background:#6a6a6a"></div>
<div class="w" style="left:68px;top:260px;font-family:'Liberation Serif',serif;color:#f0f0f0;font-size:17px;line-height:22px;white-space:nowrap;transform-origin: 0 0;transform:scaleX(0.8864)">An Elementor Page</div>
<div class="w" style="left:210.5999999999999px;top:260px;font-family:'Liberation Serif',serif;color:#f0f0f0;font-size:17px;line-height:22px;white-space:nowrap;transform-origin: 0 0;transform:scaleX(0.8348)">Blog</div>
<div class="w" style="left:262.70000000000005px;top:260px;font-family:'Liberation Serif',serif;color:#f0f0f0;font-size:17px;line-height:22px;white-space:nowrap;transform-origin: 0 0;transform:scaleX(0.8511)">Blog Posts</div>
<div class="w" style="left:349px;top:260px;font-family:'Liberation Serif',serif;color:#f0f0f0;font-size:17px;line-height:22px;white-space:nowrap;transform-origin: 0 0;transform:scaleX(0.9568)">Cart</div>
<div class="w" style="left:401px;top:260px;font-family:'Liberation Serif',serif;color:#f0f0f0;font-size:17px;line-height:22px;white-space:nowrap;transform-origin: 0 0;transform:scaleX(0.9362)">Checkout</div>
<div class="w" style="left:486.5px;top:260px;font-family:'Liberation Serif',serif;color:#f0f0f0;font-size:17px;line-height:22px;white-space:nowrap;transform-origin: 0 0;transform:scaleX(0.8846)">Elementor Landing Page</div>
<div class="w" style="left:660.5999999999999px;top:260px;font-family:'Liberation Serif',serif;color:#f0f0f0;font-size:17px;line-height:22px;white-space:nowrap;transform-origin: 0 0;transform:scaleX(0.8823)">Front Page</div>
<div class="w" style="left:68px;top:300px;font-family:'Liberation Serif',serif;color:#f0f0f0;font-size:17px;line-height:22px;white-space:nowrap;transform-origin: 0 0;transform:scaleX(0.9158)">High Definition Test (Gutenberg)</div>
<div class="w" style="left:300px;top:300px;font-family:'Liberation Serif',serif;color:#f0f0f0;font-size:17px;line-height:22px;white-space:nowrap;transform-origin: 0 0;transform:scaleX(0.9141)">High Definition Test (MCE)</div>
<div class="w" style="left:501px;top:300px;font-family:'Liberation Serif',serif;color:#f0f0f0;font-size:17px;line-height:22px;white-space:nowrap;transform-origin: 0 0;transform:scaleX(0.9387)">Home</div>
<div class="w" style="left:564px;top:300px;font-family:'Liberation Serif',serif;color:#f0f0f0;font-size:17px;line-height:22px;white-space:nowrap;transform-origin: 0 0;transform:scaleX(0.8597)">jgdGalleryMaker gallery example</div>
<div class="w" style="left:786px;top:300px;font-family:'Liberation Serif',serif;color:#f0f0f0;font-size:17px;line-height:22px;white-space:nowrap;transform-origin: 0 0;transform:scaleX(0.8920)">My account</div>
<div class="w" style="left:68px;top:340px;font-family:'Liberation Serif',serif;color:#f0f0f0;font-size:17px;line-height:22px;white-space:nowrap;transform-origin: 0 0;transform:scaleX(0.9263)">Restaurant Menu</div>
<div class="w" style="left:200px;top:340px;font-family:'Liberation Serif',serif;color:#f0f0f0;font-size:17px;line-height:22px;white-space:nowrap;transform-origin: 0 0;transform:scaleX(0.8496)">Sample Page</div>
<div class="w" style="left:299px;top:340px;font-family:'Liberation Serif',serif;color:#f0f0f0;font-size:17px;line-height:22px;white-space:nowrap;transform-origin: 0 0;transform:scaleX(0.9155)">Shop</div>
<div class="w" style="left:356px;top:340px;font-family:'Liberation Serif',serif;color:#f0f0f0;font-size:17px;line-height:22px;white-space:nowrap;transform-origin: 0 0;transform:scaleX(0.8322)">Travel Site Page</div>
<div class="w" style="left:473px;top:340px;font-family:'Liberation Serif',serif;color:#f0f0f0;font-size:17px;line-height:22px;white-space:nowrap;transform-origin: 0 0;transform:scaleX(0.8645)">Wine Site Page</div>
<div class="w" style="left:587px;top:340px;font-family:'Liberation Serif',serif;color:#f0f0f0;font-size:17px;line-height:22px;white-space:nowrap;transform-origin: 0 0;transform:scaleX(0.9238)">About The Tests</div>
<div class="w" style="left:728px;top:340px;font-family:'Liberation Serif',serif;color:#f0f0f0;font-size:17px;line-height:22px;white-space:nowrap;transform-origin: 0 0;transform:scaleX(0.8163)">Level 1</div>
<div class="w" style="left:68px;top:380px;font-family:'Liberation Serif',serif;color:#f0f0f0;font-size:17px;line-height:22px;white-space:nowrap;transform-origin: 0 0;transform:scaleX(0.9126)">Lorem Ipsum</div>
<div class="w" style="left:176px;top:380px;font-family:'Liberation Serif',serif;color:#f0f0f0;font-size:17px;line-height:22px;white-space:nowrap;transform-origin: 0 0;transform:scaleX(0.8635)">Page A</div>
<div class="w" style="left:242px;top:380px;font-family:'Liberation Serif',serif;color:#f0f0f0;font-size:17px;line-height:22px;white-space:nowrap;transform-origin: 0 0;transform:scaleX(0.8224)">Page B</div>
<svg style="position:absolute;left:706px;top:348px" width="10" height="8" viewBox="0 0 10 8"><path d="M1.5 1.5 L5 5 L8.5 1.5" fill="none" stroke="#f0f0f0" stroke-width="1.4"/></svg>
<svg style="position:absolute;left:787px;top:348px" width="10" height="8" viewBox="0 0 10 8"><path d="M1.5 1.5 L5 5 L8.5 1.5" fill="none" stroke="#f0f0f0" stroke-width="1.4"/></svg>
<div style="position:absolute;left:24px;top:433px;width:889px;height:520px;background:#f5f5f5;border-radius:25px"></div>
<div style="position:absolute;left:109px;top:457px;width:720px;height:33px;background:#d4d4d4;border-radius:8px"></div>
<div class="w" style="left:417px;top:463px;font-size:15px;color:#1e1e1e;line-height:22px;letter-spacing:1.2px">Next Page</div>
<div class="w" style="left:511px;top:463px;font-size:15px;color:#1e1e1e;line-height:22px">»</div>
<div style="position:absolute;left:109px;top:514px;width:720px;height:460px;background:#ededed;border:6px solid #1a1a1a;border-radius:17px"></div>
<div class="w" style="left:131px;top:539px;font-family:'Liberation Serif',serif;color:#ff0000;transform-origin:0 0;white-space:nowrap;color:#7a7a7a;font-size:31px;line-height:37px;transform:scaleX(0.846);text-shadow:1px 1px 1px #b0b0b0">Template: Sticky</div>
<div style="position:absolute;left:131px;top:578px;width:178px;height:1px;background:#cfcfcf"></div>
<div style="position:absolute;left:131px;top:607px;width:48px;height:48px;background:#c4c4c4;overflow:hidden"></div>
<svg style="position:absolute;left:131px;top:607px" width="48" height="48" viewBox="0 0 48 48"><circle cx="24" cy="24" r="10.5" fill="#fff"/><path d="M7 48 C7 37 41 37 41 48 Z" fill="#fff"/></svg>
<div class="w" style="left:194px;top:609px;font-size:16px;line-height:22px;color:#3a3a3a;white-space:nowrap;transform-origin:0 0;transform:scaleX(1.0504)">jgpws</div>
<div class="w" style="left:246px;top:609px;font-size:16px;line-height:22px;color:#3a3a3a;white-space:nowrap;transform-origin:0 0;transform:scaleX(0.9752)">January 7, 2012</div>
<div class="w" style="left:366px;top:609px;font-size:16px;line-height:22px;color:#3a3a3a;white-space:nowrap;transform-origin:0 0;color:#3a28d4;transform:scaleX(1.0751)">Uncategorized</div>
<div style="position:absolute;left:366px;top:630px;width:111px;height:1px;background:#cccccc"></div>
<svg style="position:absolute;left:131px;top:677px" width="300" height="113" viewBox="0 0 300 113">
<defs><linearGradient id="sky" x1="0" y1="0" x2="0" y2="1"><stop offset="0" stop-color="#8ba8cb"/><stop offset="0.45" stop-color="#7e9cc2"/><stop offset="0.68" stop-color="#7b99bf"/><stop offset="0.8" stop-color="#8499b4"/><stop offset="0.9" stop-color="#919dac"/><stop offset="0.94" stop-color="#8d959d"/><stop offset="1" stop-color="#858c92"/></linearGradient>
<clipPath id="rc"><rect x="0" y="0" width="300" height="113" rx="16" ry="16"/></clipPath></defs>
<g clip-path="url(#rc)">
<rect width="300" height="113" fill="url(#sky)"/>
<path d="M0 92 C40 86 80 90 120 87 C170 84 220 89 300 86 L300 103 L0 103 Z" fill="#95a0ae" opacity="0.55"/>
<rect x="0" y="106" width="300" height="7" fill="#858b90" opacity="0.5"/>
<g fill="#c8432e">
<path d="M110.5 10 L115 10 L108 113 L103 113 Z"/><path d="M121.5 12 L125.5 12 L119 113 L114.5 113 Z"/>
<path d="M157 12 L161 12 L166.5 113 L162 113 Z"/><path d="M162 10 L166.5 10 L175 113 L170 113 Z"/>
<rect x="110" y="9" width="57" height="6"/><rect x="107" y="70" width="64" height="7"/>
<rect x="117" y="7" width="5" height="4"/><rect x="155" y="7" width="5" height="4"/>
</g>
<path d="M129 22 L145 19 L148 35 L150 58 L145 70 L133 70 L131 50 L128 40 Z" fill="#4a4e4a"/>
<path d="M131 40 L140 38 L142 55 L134 57 Z" fill="#8e9488" opacity="0.8"/>
<rect x="134" y="52" width="6" height="18" fill="#d8d2c4" opacity="0.7"/>
<rect x="148" y="70" width="2.2" height="43" fill="#29404e"/>
<rect x="218" y="0" width="2" height="113" fill="#eef0f2"/><rect x="227.5" y="0" width="2" height="113" fill="#eef0f2"/><rect x="239" y="0" width="2" height="113" fill="#eef0f2"/>
<path d="M220 5 L227 12 L226 21 L220 16 Z" fill="#7b3c50"/><path d="M241 3 L249 10 L248 21 L241 17 Z" fill="#e4e7ea"/>
<rect x="250" y="71" width="2.2" height="42" fill="#243a4e"/><rect x="248" y="69" width="5" height="4" fill="#243a4e"/>
<rect x="16.5" y="48" width="1.5" height="44" fill="#dde2e6"/><path d="M13 58 L22 58 L17.5 54 Z" fill="#e2e6ea"/>
<rect x="20" y="92" width="7" height="21" fill="#e6e6e6"/>
<rect x="266.5" y="48" width="1.5" height="65" fill="#d8dde2"/><path d="M263 58 L272 58 L267.5 54 Z" fill="#e2e6ea"/>
</g></svg>
<div class="w" style="left:463px;top:686px;font-size:16px;line-height:24px;color:#3a3a3a;white-space:nowrap;transform-origin:0 0;transform:scaleX(1.0505)">This is a sticky post. There are a few things to</div>
<div class="w" style="left:463px;top:710px;font-size:16px;line-height:24px;color:#3a3a3a;white-space:nowrap;transform-origin:0 0;transform:scaleX(1.0722)">verify: The sticky post should be</div>
<div class="w" style="left:463px;top:734px;font-size:16px;line-height:24px;color:#3a3a3a;white-space:nowrap;transform-origin:0 0;transform:scaleX(1.0823)">distinctly recognizable in some way in</div>
<div class="w" style="left:463px;top:758px;font-size:16px;line-height:24px;color:#3a3a3a;white-space:nowrap;transform-origin:0 0;transform:scaleX(1.0668)">comparison to normal posts. You can style</div>
<div class="w" style="left:463px;top:782px;font-size:16px;line-height:24px;color:#3a3a3a;white-space:nowrap;transform-origin:0 0;transform:scaleX(1.0798)">the .sticky class if you are using the</div>
<div class="w" style="left:463px;top:806px;font-size:16px;line-height:24px;color:#3a3a3a;white-space:nowrap;transform-origin:0 0;transform:scaleX(1.0739)">post_class() function to generate your post</div>
<div class="w" style="left:131px;top:830px;font-size:16px;line-height:24px;color:#3a3a3a;white-space:nowrap;transform-origin:0 0;transform:scaleX(1.0648)">classes, which is a best practice. They should show at the very top</div>
<div class="w" style="left:131px;top:878px;font-size:16px;line-height:24px;color:#3a3a3a;white-space:nowrap;transform-origin:0 0;color:#3a28d4;transform:scaleX(1.0001)">Continue reading…</div>
<div style="position:absolute;left:131px;top:903px;width:138px;height:1px;background:#cccccc"></div>
<div style="position:absolute;background:rgba(0,0,0,0.038);left:727px;top:721px;width:186px;height:203px;overflow:hidden"></div>
<div style="position:absolute;background:rgba(0,0,0,0.038);left:621px;top:801px;width:106px;height:123px"></div>
<div style="position:absolute;background:rgba(0,0,0,0.038);left:488px;top:814px;width:133px;height:110px"></div>
<div style="position:absolute;background:rgba(0,0,0,0.038);left:488px;top:814px;width:133px;height:24px;background:rgba(120,60,0,0.02)"></div>
<div style="position:absolute;background:rgba(0,0,0,0.038);left:621px;top:839px;width:106px;height:21px;background:rgba(0,0,0,0.02)"></div>
<div style="position:absolute;left:727px;top:720px;width:186px;height:20px;overflow:hidden"><div style="position:absolute;font-size:13px;line-height:20px;color:rgba(255,255,255,0.4);white-space:nowrap;left:4px;top:0">Document Scanner</div></div>
<div style="position:absolute;left:727px;top:740px;width:186px;height:20px;overflow:hidden"><div style="position:absolute;font-size:13px;line-height:20px;color:rgba(255,255,255,0.4);white-space:nowrap;left:4px;top:0">GNU Image Manipulation Program</div></div>
<div style="position:absolute;left:727px;top:760px;width:186px;height:20px;overflow:hidden"><div style="position:absolute;font-size:13px;line-height:20px;color:rgba(255,255,255,0.4);white-space:nowrap;left:4px;top:0"></div></div>
<div style="position:absolute;left:727px;top:780px;width:186px;height:20px;overflow:hidden"><div style="position:absolute;font-size:13px;line-height:20px;color:rgba(255,255,255,0.4);white-space:nowrap;left:4px;top:0">Geeqie</div></div>
<div style="position:absolute;left:727px;top:800px;width:186px;height:20px;overflow:hidden"><div style="position:absolute;font-size:13px;line-height:20px;color:rgba(255,255,255,0.4);white-space:nowrap;left:4px;top:0">Geeqie Cache Maintenance</div></div>
<div style="position:absolute;left:727px;top:820px;width:186px;height:20px;overflow:hidden"><div style="position:absolute;font-size:13px;line-height:20px;color:rgba(255,255,255,0.4);white-space:nowrap;left:4px;top:0">Image Scan! for Linux</div></div>
<div style="position:absolute;left:727px;top:840px;width:186px;height:20px;overflow:hidden"><div style="position:absolute;font-size:13px;line-height:20px;color:rgba(255,255,255,0.4);white-space:nowrap;left:4px;top:0">Inkscape</div></div>
<div style="position:absolute;left:727px;top:860px;width:186px;height:20px;overflow:hidden"><div style="position:absolute;font-size:13px;line-height:20px;color:rgba(255,255,255,0.4);white-space:nowrap;left:4px;top:0">LibreOffice Draw</div></div>
<div style="position:absolute;left:727px;top:880px;width:186px;height:20px;overflow:hidden"><div style="position:absolute;font-size:13px;line-height:20px;color:rgba(255,255,255,0.4);white-space:nowrap;left:4px;top:0">Peek</div></div>
<div style="position:absolute;left:727px;top:900px;width:186px;height:20px;overflow:hidden"><div style="position:absolute;font-size:13px;line-height:20px;color:rgba(255,255,255,0.4);white-space:nowrap;left:4px;top:0">XDvi</div></div>
<div style="position:absolute;font-size:13px;line-height:20px;color:rgba(255,255,255,0.4);white-space:nowrap;left:626px;top:800px">Accessories</div>
<div style="position:absolute;font-size:13px;line-height:20px;color:rgba(255,255,255,0.4);white-space:nowrap;left:626px;top:820px">Education</div>
<div style="position:absolute;font-size:13px;line-height:20px;color:rgba(255,255,255,0.4);white-space:nowrap;left:626px;top:840px">Graphics</div>
<div style="position:absolute;font-size:13px;line-height:20px;color:rgba(255,255,255,0.4);white-space:nowrap;left:626px;top:860px">Internet</div>
<div style="position:absolute;font-size:13px;line-height:20px;color:rgba(255,255,255,0.4);white-space:nowrap;left:626px;top:880px">Office</div>
<div style="position:absolute;font-size:13px;line-height:20px;color:rgba(255,255,255,0.4);white-space:nowrap;left:626px;top:900px">Programming</div>
<div style="position:absolute;font-size:13px;line-height:20px;color:rgba(255,255,255,0.4);white-space:nowrap;left:493px;top:817px">Openbox</div>
<div style="position:absolute;font-size:13px;line-height:20px;color:rgba(255,255,255,0.4);white-space:nowrap;left:493px;top:839px">Applications</div>
<div style="position:absolute;font-size:13px;line-height:20px;color:rgba(255,255,255,0.4);white-space:nowrap;left:493px;top:859px">Settings</div>
<div style="position:absolute;font-size:13px;line-height:20px;color:rgba(255,255,255,0.4);white-space:nowrap;left:493px;top:879px">Development Tools</div>
<div style="position:absolute;font-size:13px;line-height:20px;color:rgba(255,255,255,0.4);white-space:nowrap;left:493px;top:905px">Reconfigure Openbox</div>
</div>
<div style="position:absolute;left:964px;top:0;width:936px;height:1px;background:#a9adba"></div>
</body></html>
